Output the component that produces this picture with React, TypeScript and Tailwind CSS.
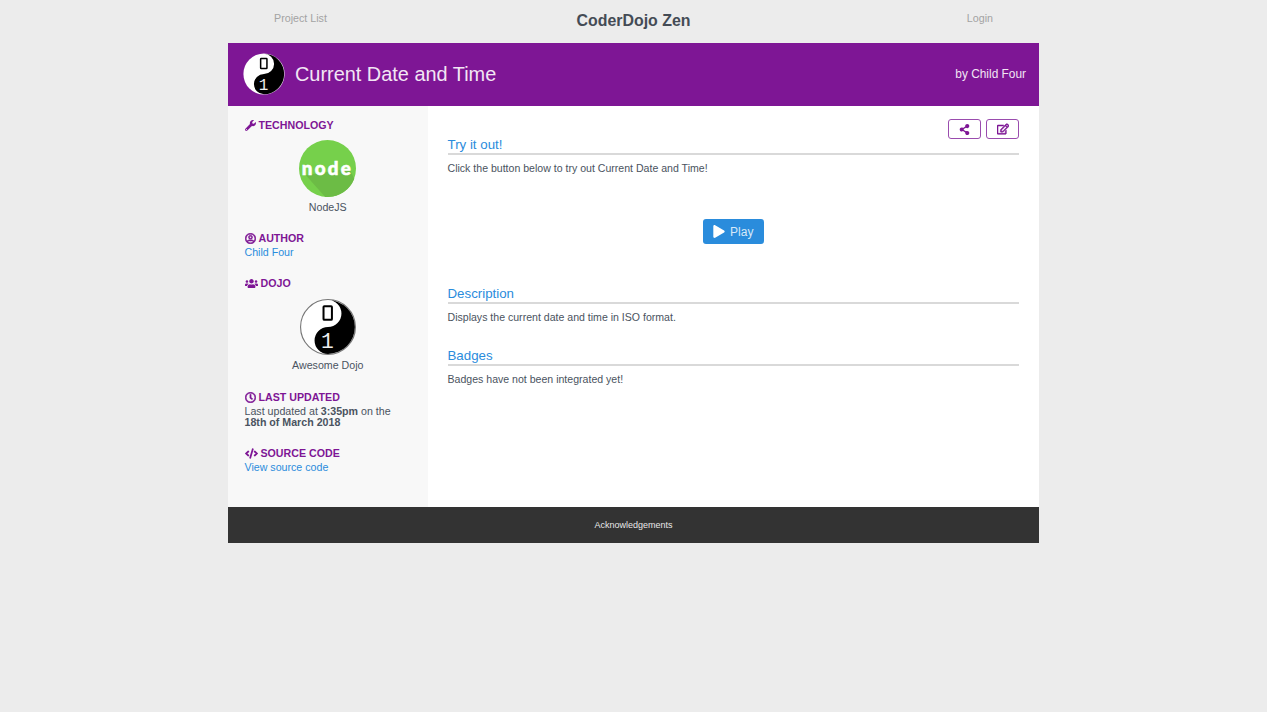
import type { ReactNode } from "react";
import { FaCode, FaPlay, FaRegClock, FaRegEdit, FaRegUserCircle, FaShareAlt, FaUsers, FaWrench } from "react-icons/fa";

function DojoLogo({ className, ring }: { className: string; ring?: boolean }) {
  return (
    <svg viewBox="0 0 100 100" className={className}>
      <circle cx="50" cy="50" r="49" fill="#fff" stroke={ring ? "#777" : "none"} strokeWidth="2" />
      <path d="M50 2a48 48 0 0 1 0 96a24 24 0 0 1 0-48a24 24 0 0 0 0-48z" fill="#000" />
      <rect x="42" y="13" width="15" height="24" rx="1.5" fill="none" stroke="#000" strokeWidth="3.6" />
      <text x="49" y="88" textAnchor="middle" fontFamily="'Liberation Mono', monospace" fontSize="38" fill="#eee">
        1
      </text>
    </svg>
  );
}

function NodeLogo() {
  return (
    <svg viewBox="0 0 100 100" className="h-[57px] w-[57px]">
      <circle cx="50" cy="50" r="50" fill="#76d04b" />
      <path d="M12 62L88 50L97 68A50 50 0 0 1 50 100A50 50 0 0 1 46 100z" fill="#6cbc45" />
      <text x="50" y="61" textAnchor="middle" fontFamily="Lato, sans-serif" fontWeight="900" fontSize="33" letterSpacing="4" fill="#fff" stroke="#fff" strokeWidth="1">
        node
      </text>
    </svg>
  );
}

function SideHeading({ icon, children }: { icon: ReactNode; children: ReactNode }) {
  return (
    <h4 className="flex items-center gap-[3px] text-[10.65px] leading-[14px] font-bold text-[#7e1695]">
      {icon}
      <span>{children}</span>
    </h4>
  );
}

function Section({ title, children }: { title: string; children: ReactNode }) {
  return (
    <section>
      <h3 className="-mt-[1px] border-b-2 border-[#d9d9d9] pt-[1px] text-[13.3px] leading-[17px] text-[#2a8cdc]">{title}</h3>
      <p className="mt-[6px] text-[10.57px] leading-[14px]">{children}</p>
    </section>
  );
}

export default function App() {
  return (
    <div className="min-h-[712px] bg-[#ececec] font-['Liberation_Sans',Arial,sans-serif] text-[#4a5360]">
      <div className="mx-auto w-[811px]">
        <nav className="grid h-[43px] grid-cols-[1fr_auto_1fr] text-[#a3a3a3]">
          <a className="pt-[11px] pl-[46px] text-[10.7px] leading-[14px]">Project List</a>
          <span className="pt-[11px] text-[15.9px] leading-[20px] font-bold text-[#444b55]">CoderDojo Zen</span>
          <a className="pt-[11px] pr-[46px] text-right text-[10.7px] leading-[14px]">Login</a>
        </nav>

        <header className="flex h-[63px] items-center bg-[#7e1695] pr-[13px] pb-[2px] pl-[15px] text-[#f2e6f4]">
          <DojoLogo className="h-[42px] w-[42px]" />
          <h1 className="ml-[10px] flex-1 text-[19.9px] leading-[26px]">Current Date and Time</h1>
          <span className="text-[11.9px] leading-[16px]">by Child Four</span>
        </header>

        <div className="flex h-[401px]">
          <aside className="w-[200px] bg-[#f8f8f8] pt-[12px] pr-[17px] pl-[16.5px]">
            <SideHeading icon={<FaWrench className="h-[11px] w-[11px]" />}>TECHNOLOGY</SideHeading>
            <div className="mt-[8px] flex flex-col items-center text-[10.65px] leading-[14px]">
              <NodeLogo />
              <span className="mt-[3px]">NodeJS</span>
            </div>

            <div className="mt-[17px]">
              <SideHeading icon={<FaRegUserCircle className="h-[11px] w-[11px]" stroke="currentColor" strokeWidth={25} />}>AUTHOR</SideHeading>
              <a className="block text-[10.65px] leading-[14px] text-[#2a8cdc]">Child Four</a>
            </div>

            <div className="mt-[17px]">
              <SideHeading icon={<FaUsers className="h-[13px] w-[13px]" />}>DOJO</SideHeading>
              <div className="mt-[9px] flex flex-col items-center text-[10.65px] leading-[14px]">
                <DojoLogo ring className="h-[56px] w-[56px]" />
                <span className="mt-[3px]">Awesome Dojo</span>
              </div>
            </div>

            <div className="mt-[18px]">
              <SideHeading icon={<FaRegClock className="h-[11px] w-[11px]" stroke="currentColor" strokeWidth={25} />}>LAST UPDATED</SideHeading>
              <p className="mt-[2px] text-[10.65px] leading-[11px]">
                Last updated at <b>3:35pm</b> on the <b>18th of March 2018</b>
              </p>
            </div>

            <div className="mt-[18px]">
              <SideHeading icon={<FaCode className="h-[13px] w-[13px]" />}>SOURCE CODE</SideHeading>
              <a className="block text-[10.65px] leading-[14px] text-[#2a8cdc]">View source code</a>
            </div>
          </aside>

          <main className="flex-1 bg-white pt-[13px] pr-[20px] pl-[19.5px]">
            <div className="flex justify-end gap-[5px]">
              <button className="flex h-[20px] w-[33px] items-center justify-center rounded-[3px] border border-[#9a4cae] text-[#7e1695]">
                <FaShareAlt className="h-[11px] w-[11px]" />
              </button>
              <button className="flex h-[20px] w-[33px] items-center justify-center rounded-[3px] border border-[#9a4cae] text-[#7e1695]">
                <FaRegEdit className="h-[12px] w-[12px]" stroke="currentColor" strokeWidth={25} />
              </button>
            </div>

            <div className="-mt-[4px]">
              <Section title="Try it out!">Click the button below to try out Current Date and Time!</Section>
            </div>
            <div className="mt-[44px] flex justify-center">
              <button className="flex h-[25px] w-[61px] items-center justify-center gap-[5px] rounded-[3px] bg-[#2a8cdc] text-[12px] text-[#d6e9f8]">
                <FaPlay className="h-[13px] w-[12px] text-white" />
                Play
              </button>
            </div>
            <div className="mt-[41px]">
              <Section title="Description">Displays the current date and time in ISO format.</Section>
            </div>
            <div className="mt-[23px]">
              <Section title="Badges">Badges have not been integrated yet!</Section>
            </div>
          </main>
        </div>

        <footer className="flex h-[36px] items-center justify-center bg-[#333] pt-[1px] text-[9px] text-[#e8e8e8]">Acknowledgements</footer>
      </div>
    </div>
  );
}
